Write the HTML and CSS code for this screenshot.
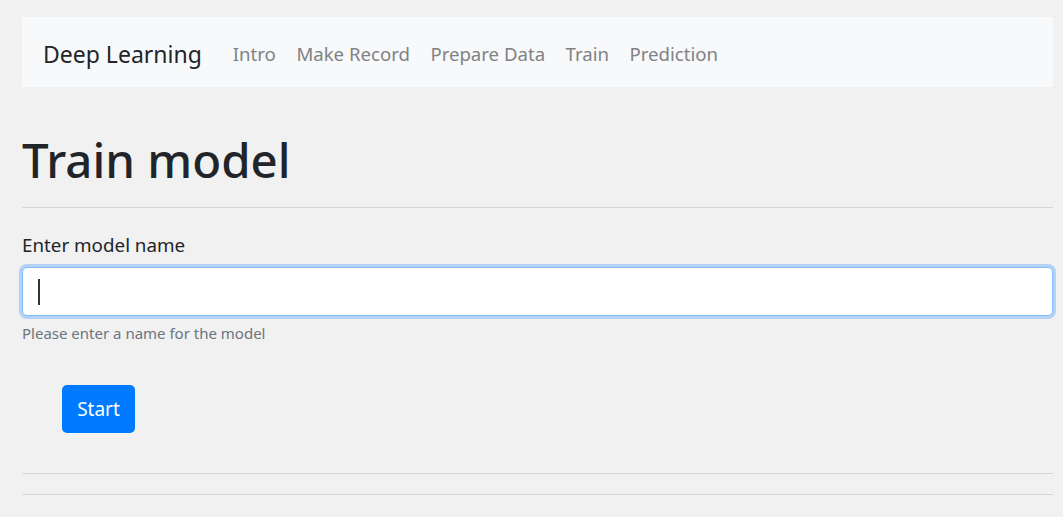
FILE: index.html
```html
<!DOCTYPE html>
<html lang="en">
<head>
<meta charset="utf-8">
<title>Train model</title>
<link rel="stylesheet" href="styles.css">
</head>
<body>
<div class="container">
  <nav class="navbar">
    <span class="brand">Deep Learning</span>
    <ul class="nav">
      <li>Intro</li>
      <li>Make Record</li>
      <li>Prepare Data</li>
      <li>Train</li>
      <li>Prediction</li>
    </ul>
  </nav>
  <h1 class="title">Train model</h1>
  <hr class="rule">
  <form class="form">
    <label class="label" for="name">Enter model name</label>
    <div class="input-wrap"><input class="input" id="name" type="text"><span class="caret"></span></div>
    <small class="help">Please enter a name for the model</small>
    <div class="actions"><button type="button" class="btn">Start</button></div>
  </form>
  <hr class="rule rule-a">
  <hr class="rule rule-b">
</div>
</body>
</html>
```
FILE: styles.css
```css
* { box-sizing: border-box; }
html, body { margin: 0; padding: 0; }
body {
  background: #f1f1f1;
  font-family: "Noto Sans", "Open Sans", sans-serif;
  color: #212529;
}
.container {
  margin: 0 10px 0 22px;
  padding-top: 17px;
}
.navbar {
  height: 70px;
  background: #f8f9fa;
  display: flex;
  align-items: center;
  padding: 3px 0 0 21px;
}
.brand {
  font-size: 23px;
  color: #212529;
  margin-right: 31px;
}
.nav {
  display: flex;
  list-style: none;
  margin: 0;
  padding: 0;
  gap: 20.5px;
}
.nav li {
  font-size: 18.6px;
  color: #808284;
}
.title {
  font-size: 47.4px;
  font-weight: 500;
  margin: 44px 0 0 0;
  line-height: 58px;
  color: #212529;
}
.rule {
  border: 0;
  border-top: 1px solid #d6d6d6;
  margin: 0;
}
.title + .rule { margin-top: 18px; }
.form { padding-top: 25px; }
.label {
  display: block;
  font-size: 18.8px;
  line-height: 24px;
  margin-bottom: 10px;
}
.input-wrap { position: relative; }
.input {
  display: block;
  width: 100%;
  height: 49px;
  border: 1px solid #80bdff;
  border-radius: 5px;
  background: #fff;
  box-shadow: 0 0 0 3px rgba(0,123,255,.25);
  outline: none;
  font-size: 19px;
}
.caret {
  position: absolute;
  left: 16px;
  top: 12px;
  width: 2px;
  height: 26px;
  background: #333;
}
.help {
  display: block;
  font-size: 15px;
  color: #6c757d;
  margin-top: 7px;
}
.actions { padding: 42px 0 0 40px; }
.btn {
  background: #007bff;
  color: #fff;
  border: 0;
  border-radius: 5px;
  height: 48px;
  width: 73px;
  font-family: inherit;
  font-size: 19px;
}
.rule-a { margin-top: 40px; }
.rule-b { margin-top: 20px; }
```
